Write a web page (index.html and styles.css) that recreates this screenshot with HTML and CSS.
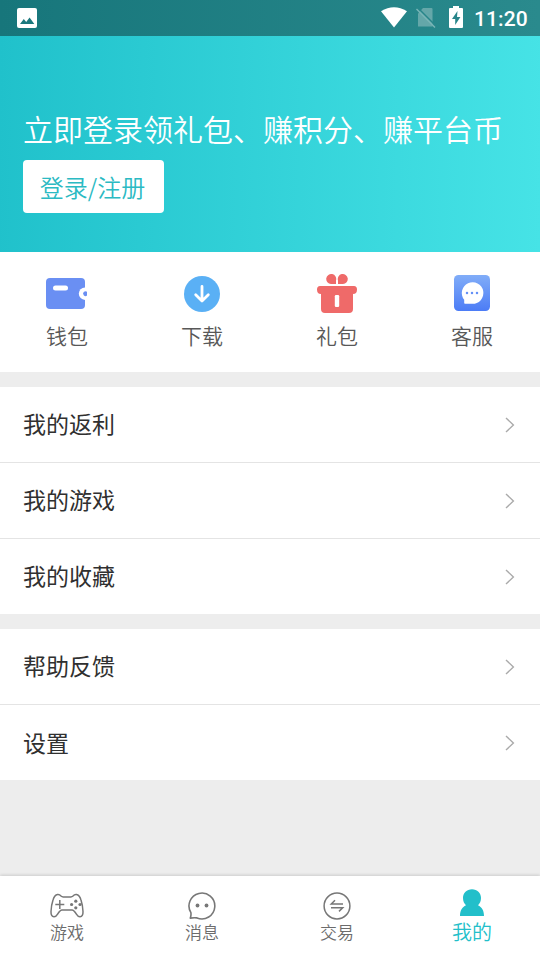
FILE: index.html
```html
<!DOCTYPE html>
<html lang="zh-CN">
<head>
<meta charset="utf-8">
<title>我的</title>
<link rel="stylesheet" href="styles.css">
</head>
<body>
<div class="screen">
  <header class="hero">
    <div class="status">
      <svg class="photo" width="20" height="20" viewBox="0 0 20 20"><rect width="20" height="20" rx="2" fill="#fff"/><path d="M3 16l3.8-5 2.4 3 3.4-4.4L17.3 16z" fill="#1b787d"/></svg>
      <svg width="26" height="21" viewBox="0 0 26 21"><path d="M0 4.2Q13-3.8 26 4.2L13 20.6z" fill="#fff"/></svg>
      <svg class="sim" width="20" height="22" viewBox="0 0 20 22"><path d="M2 6.500L7 1H15.500q1 0 1 1v17.500H2z" fill="#64a7a9"/><path d="M2 1L20 19" stroke="#27858a" stroke-width="1.500"/><path d="M.5 2L19 20.500" stroke="#7ab5b7" stroke-width="1.500"/></svg>
      <svg class="battery" width="14" height="22" viewBox="0 0 14 22"><path d="M4 0h6v2h3q1 0 1 1v18q0 1-1 1H1q-1 0-1-1V3q0-1 1-1h3z" fill="#fff"/><path d="M8.5 5L3 13h3.2v6L11.4 11H8z" fill="#27858a"/></svg>
      <span class="clock">11:20</span>
    </div>
    <div class="intro">立即登录领礼包、赚积分、赚平台币</div>
    <a class="login">登录/注册</a>
  </header>
  <section class="shortcuts">
    <div class="shortcut">
      <svg width="42" height="42" viewBox="0 0 42 42"><rect y="5" width="39" height="31" rx="4" fill="#6a8ff3"/><rect x="7" y="12.5" width="15" height="5" rx="2.5" fill="#fff"/><circle cx="39" cy="20.7" r="6.2" fill="#fff"/><path d="M41 18.8a2.4 2.4 0 1 0 0 3.8z" fill="#6a8ff3"/></svg>
      <span>钱包</span>
    </div>
    <div class="shortcut">
      <svg width="42" height="42" viewBox="0 0 42 42"><circle cx="21" cy="21" r="18" fill="#5ab0f5"/><path d="M21 13.5v14M14.7 21.8L21 28l6.3-6.2" fill="none" stroke="#fff" stroke-width="2.8" stroke-linecap="round" stroke-linejoin="round"/></svg>
      <span>下载</span>
    </div>
    <div class="shortcut">
      <svg width="42" height="42" viewBox="0 0 42 42"><g fill="#ef6a69"><path d="M20 11V7.500a5 5 0 1 0-5 3.500zM22 11V7.500a5 5 0 1 1 5 3.500z"/><path d="M4 13h34q3 0 3 3.500 0 4.500-4 4.500v15q0 4-4 4H9q-4 0-4-4V21q-4 0-4-4.500Q1 13 4 13z"/></g><rect x="18.800" y="22" width="4.400" height="12" rx="1.200" fill="#fff"/></svg>
      <span>礼包</span>
    </div>
    <div class="shortcut">
      <svg width="42" height="42" viewBox="0 0 42 42"><defs><linearGradient id="chat" x2="0" y2="1"><stop stop-color="#81adf8"/><stop offset="1" stop-color="#4c7cf6"/></linearGradient></defs><rect x="3" y="2" width="36" height="36" rx="4.500" fill="url(#chat)"/><path d="M14 30.800q-.8 0-.8-.8v-3.200A10.800 10.800 0 1 1 21 30.800z" fill="#fff"/><g fill="#6591f7"><circle cx="16" cy="20" r="1.250"/><circle cx="21" cy="20" r="1.250"/><circle cx="26" cy="20" r="1.250"/></g></svg>
      <span>客服</span>
    </div>
  </section>
  <section class="menu">
    <div class="row"><span>我的返利</span><svg width="10" height="16" viewBox="0 0 10 16"><path d="M1 1l7.400 7L1 15"/></svg></div>
    <div class="row"><span>我的游戏</span><svg width="10" height="16" viewBox="0 0 10 16"><path d="M1 1l7.400 7L1 15"/></svg></div>
    <div class="row"><span>我的收藏</span><svg width="10" height="16" viewBox="0 0 10 16"><path d="M1 1l7.400 7L1 15"/></svg></div>
  </section>
  <section class="menu">
    <div class="row"><span>帮助反馈</span><svg width="10" height="16" viewBox="0 0 10 16"><path d="M1 1l7.400 7L1 15"/></svg></div>
    <div class="row"><span>设置</span><svg width="10" height="16" viewBox="0 0 10 16"><path d="M1 1l7.400 7L1 15"/></svg></div>
  </section>
  <nav class="tabs">
    <div class="tab">
      <svg width="36" height="30" viewBox="0 0 36 30"><path d="M8.500 3.500Q10.500 3.200 12 5q1 .9 2.200.9h7.600q1.200 0 2.200-.9 1.500-1.800 3.500-1.500 3 .5 4.500 5.500 1.800 5.500 2 11.500.2 5-3 5.300-2 .1-3.600-2.600-2.400-4.200-4.400-4.200H13q-2 0-4.400 4.200Q7 25.900 5 25.800 1.800 25.500 2 20.500 2.200 14.500 4 9q1.500-5 4.500-5.500z" fill="none" stroke="#777" stroke-width="1.500"/><path d="M6.300 13.500h9M10.800 9v9" stroke="#777" stroke-width="1.500"/><g fill="#777"><circle cx="26.800" cy="10.200" r="1.600"/><circle cx="22.600" cy="13.500" r="1.600"/><circle cx="31" cy="13.500" r="1.600"/><circle cx="26.800" cy="16.800" r="1.600"/></g></svg>
      <span>游戏</span>
    </div>
    <div class="tab">
      <svg width="36" height="30" viewBox="0 0 36 30"><path d="M6.300 27.100Q7.300 24.500 6.900 21.700A12.900 12.900 0 1 1 13 26.900Q10 26.500 6.300 27.100z" fill="none" stroke="#777" stroke-width="1.600" stroke-linejoin="round"/><circle cx="13.500" cy="14.500" r="1.900" fill="#777"/><circle cx="22.500" cy="14.500" r="1.900" fill="#777"/></svg>
      <span>消息</span>
    </div>
    <div class="tab">
      <svg width="36" height="30" viewBox="0 0 36 30"><g fill="none" stroke="#777" stroke-width="1.500"><circle cx="18" cy="15" r="12.900"/><path d="M24 12.900H12.300L16 9.300M12 16.800h11.700L20 20.400"/></g></svg>
      <span>交易</span>
    </div>
    <div class="tab active">
      <svg width="36" height="30" viewBox="0 0 36 30"><path d="M18 1.200c5.200 0 9 3.800 9 8.800 0 3.300-1.200 5.400-3 7.200 3.800 2 6 5 6 10.800H6c0-5.800 2.200-8.800 6-10.800-1.800-1.800-3-3.900-3-7.200 0-5 3.800-8.800 9-8.800z" fill="#22bfca"/></svg>
      <span>我的</span>
    </div>
  </nav>
</div>
</body>
</html>
```
FILE: styles.css
```css
* { box-sizing: border-box; }
body { margin: 0; font-family: "Noto Sans CJK SC", sans-serif; }
.screen { width: 540px; height: 960px; display: flex; flex-direction: column; background: #ededed; overflow: hidden; }
.screen svg { display: block; flex: none; }

.hero { height: 252px; background: linear-gradient(91deg, #20c1cb, #46e3e6); }
.status { height: 36px; padding: 0 12px 2px 17px; display: flex; align-items: center; background: linear-gradient(90deg, #17767b, #2a8a8d); }
.photo { margin: 2px auto 0 0; }
.sim { margin: 2px 0 0 9px; }
.battery { margin: 0 11px 0 13px; }
.clock { width: 54px; font: 500 21px/36px Roboto, sans-serif; color: #fff; white-space: nowrap; margin-top: 3px; letter-spacing: .1px; }
.intro { margin: 70px 0 0 23px; height: 44px; line-height: 44px; font-size: 30px; font-weight: 350; color: #fff; white-space: nowrap; }
.login { display: flex; align-items: center; justify-content: center; width: 141px; height: 53px; margin: 10px 0 0 23px; padding: 0 2px 1px 0; border-radius: 4px; background: #fff; color: #2bbac3; font-size: 24px; font-weight: 350; }

.shortcuts { height: 120px; display: grid; grid-template-columns: repeat(4, 1fr); background: #fff; }
.shortcut { display: flex; flex-direction: column; align-items: center; padding: 21px 1px 0 0; font-size: 21px; line-height: 30px; font-weight: 350; color: #585858; }
.shortcut span { margin-top: 5px; }

.menu { margin-top: 15px; background: #fff; }
.row { height: 75px; display: flex; align-items: center; justify-content: space-between; padding: 0 25px 0 23px; font-size: 23px; font-weight: 400; color: #303030; }
.row span { margin-bottom: 4px; }
.row + .row { height: 76px; border-top: 1px solid #e4e4e4; }
.row:last-child:nth-child(2) span { margin-bottom: 2px; }
.row path { fill: none; stroke: #aaa; stroke-width: 1.400; }

.tabs { height: 84px; margin-top: auto; display: grid; grid-template-columns: repeat(4, 1fr); background: #fff; box-shadow: 0 -1px 3px rgba(0, 0, 0, .14); }
.tab { display: flex; flex-direction: column; align-items: center; padding: 15px 1px 0 0; font-size: 17px; line-height: 22px; font-weight: 350; color: #6c6c6c; }
.active { padding-top: 12px; font-size: 20px; line-height: 28px; color: #22bfca; }
```
